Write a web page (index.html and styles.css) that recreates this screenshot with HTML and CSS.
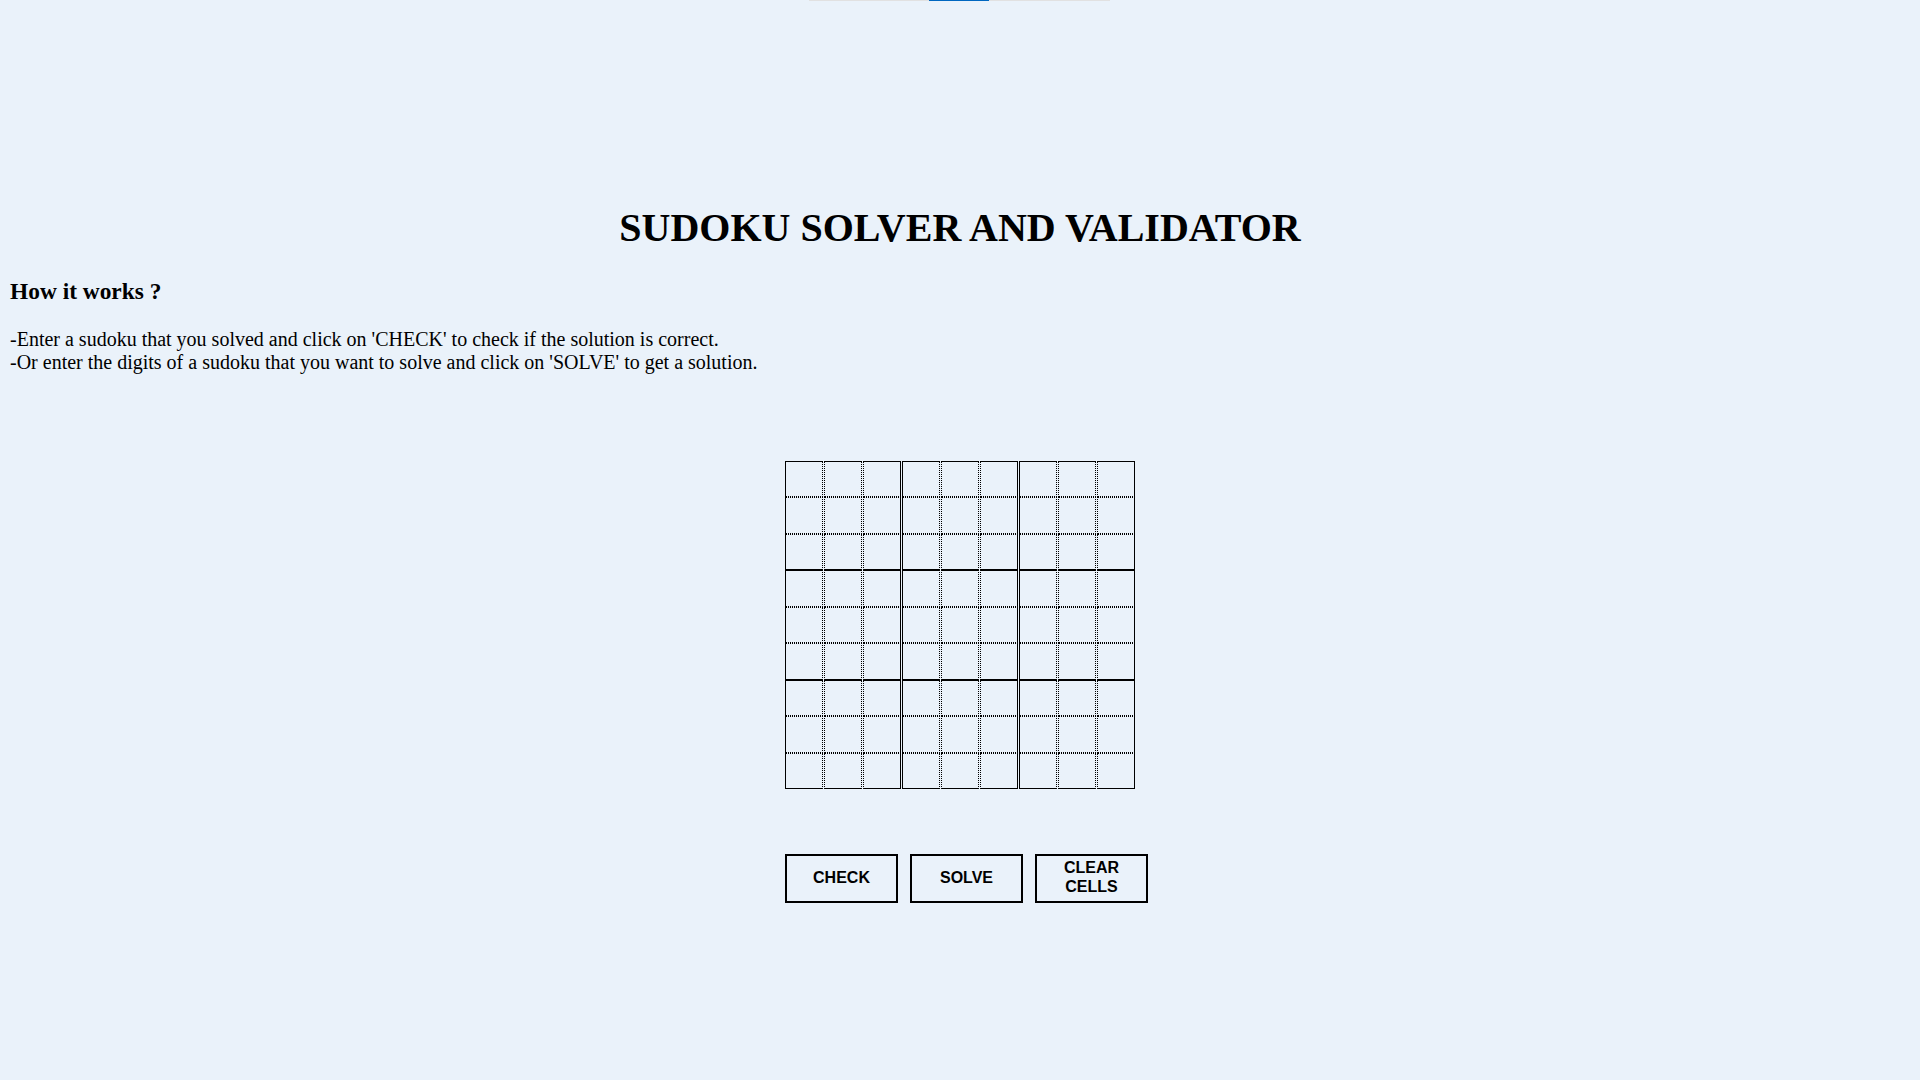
FILE: index.html
```html
<!DOCTYPE html>
<html lang="en">
<head>
<meta charset="utf-8">
<title>Sudoku Solver and Validator</title>
<link rel="stylesheet" href="styles.css">
</head>
<body>
<div class="loader"><div class="loader-fill"></div></div>
<main class="page">
  <h1 class="title">SUDOKU SOLVER AND VALIDATOR</h1>
  <h3 class="subtitle">How it works ?</h3>
  <p class="intro">-Enter a sudoku that you solved and click on 'CHECK' to check if the solution is correct.<br>-Or enter the digits of a sudoku that you want to solve and click on 'SOLVE' to get a solution.</p>
  <section class="board">
    <div class="grid">
      <input class="cell"><input class="cell"><input class="cell"><input class="cell"><input class="cell"><input class="cell"><input class="cell"><input class="cell"><input class="cell">
      <input class="cell"><input class="cell"><input class="cell"><input class="cell"><input class="cell"><input class="cell"><input class="cell"><input class="cell"><input class="cell">
      <input class="cell"><input class="cell"><input class="cell"><input class="cell"><input class="cell"><input class="cell"><input class="cell"><input class="cell"><input class="cell">
      <input class="cell"><input class="cell"><input class="cell"><input class="cell"><input class="cell"><input class="cell"><input class="cell"><input class="cell"><input class="cell">
      <input class="cell"><input class="cell"><input class="cell"><input class="cell"><input class="cell"><input class="cell"><input class="cell"><input class="cell"><input class="cell">
      <input class="cell"><input class="cell"><input class="cell"><input class="cell"><input class="cell"><input class="cell"><input class="cell"><input class="cell"><input class="cell">
      <input class="cell"><input class="cell"><input class="cell"><input class="cell"><input class="cell"><input class="cell"><input class="cell"><input class="cell"><input class="cell">
      <input class="cell"><input class="cell"><input class="cell"><input class="cell"><input class="cell"><input class="cell"><input class="cell"><input class="cell"><input class="cell">
      <input class="cell"><input class="cell"><input class="cell"><input class="cell"><input class="cell"><input class="cell"><input class="cell"><input class="cell"><input class="cell">
    </div>
    <div class="actions">
      <button class="btn">CHECK</button>
      <button class="btn">SOLVE</button>
      <button class="btn">CLEAR CELLS</button>
    </div>
  </section>
</main>
</body>
</html>
```
FILE: styles.css
```css
html, body {
  background: #eaf2fa;
}
body {
  margin: 8px;
  font-family: "Liberation Serif", "Times New Roman", serif;
  font-size: 20px;
  color: #000;
}
.loader {
  position: absolute;
  top: 0;
  left: 809px;
  width: 301px;
  height: 1px;
  background: #e1e1e1;
}
.loader-fill {
  margin-left: 120px;
  width: 60px;
  height: 1px;
  background: #0067c0;
}
.page {
  padding: 169px 2px 0;
}
.title {
  font-size: 40px;
  font-weight: bold;
  text-align: center;
  margin: 26.8px 0;
}
.subtitle {
  font-size: 23.4px;
  font-weight: bold;
  margin: 23.4px 0;
}
.intro {
  margin: 20px 0;
}
.board {
  width: 350px;
  margin: 87px auto 0;
}
.grid {
  display: grid;
  grid-template-columns: repeat(9, 38px);
  grid-template-rows: repeat(9, 1fr);
  column-gap: 1px;
  row-gap: 0;
  height: 328px;
}
.cell {
  box-sizing: border-box;
  width: 38px;
  height: 100%;
  margin: 0;
  padding: 0;
  border: 1px dotted #000;
  background: transparent;
  font-family: "Liberation Sans", Arial, sans-serif;
  font-size: 20px;
  text-align: center;
  outline: none;
}
.cell:nth-child(9n+1),
.cell:nth-child(9n+4),
.cell:nth-child(9n+7) {
  border-left-style: solid;
}
.cell:nth-child(9n+3),
.cell:nth-child(9n+6),
.cell:nth-child(9n) {
  border-right-style: solid;
}
.cell:nth-child(-n+9),
.cell:nth-child(n+28):nth-child(-n+36),
.cell:nth-child(n+55):nth-child(-n+63) {
  border-top-style: solid;
}
.cell:nth-child(n+19):nth-child(-n+27),
.cell:nth-child(n+46):nth-child(-n+54),
.cell:nth-child(n+73) {
  border-bottom-style: solid;
}
.actions {
  display: flex;
  gap: 12px;
  margin-top: 65px;
}
.btn {
  flex: 0 0 auto;
  box-sizing: border-box;
  width: 113px;
  height: 49px;
  padding: 0 6px 2px;
  border: 2px solid #000;
  background: transparent;
  color: #000;
  font-family: "Liberation Sans", Arial, sans-serif;
  font-size: 16px;
  font-weight: bold;
  line-height: 1.2;
}
```
